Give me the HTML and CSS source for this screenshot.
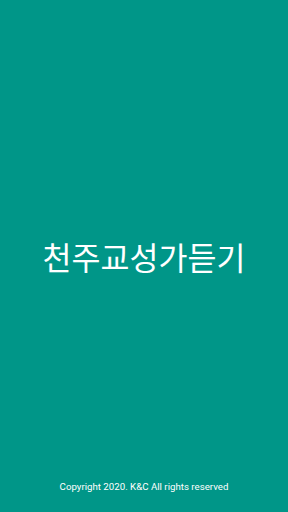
FILE: index.html
```html
<!DOCTYPE html>
<html lang="ko">
  <head>
    <meta charset="UTF-8" />
    <meta name="viewport" content="width=device-width, initial-scale=1.0" />
    <title>천주교성가듣기</title>
    <link rel="stylesheet" href="styles.css">
  </head>
  <body>
    <div class="splash">
      <div class="splash-main">
        <h1 class="app-title">천주교성가듣기</h1>
      </div>
      <p class="copyright">Copyright 2020. K&amp;C All rights reserved</p>
    </div>
  </body>
</html>
```

FILE: styles.css
```css
html,
body {
  margin: 0;
  padding: 0;
  height: 100%;
}

body {
  background-color: #009688;
  font-family: Roboto, "Noto Sans CJK KR", sans-serif;
  color: white;
}

.splash {
  display: flex;
  flex-direction: column;
  height: 512px;
}

.splash-main {
  flex: 1;
  display: flex;
  align-items: center;
  justify-content: center;
  padding-top: 30px;
}

.app-title {
  margin: 0;
  font-family: "Noto Sans CJK KR", sans-serif;
  font-size: 31.5px;
  font-weight: 400;
}

.copyright {
  margin: 0 0 20px;
  text-align: center;
  font-size: 9.7px;
}
```
